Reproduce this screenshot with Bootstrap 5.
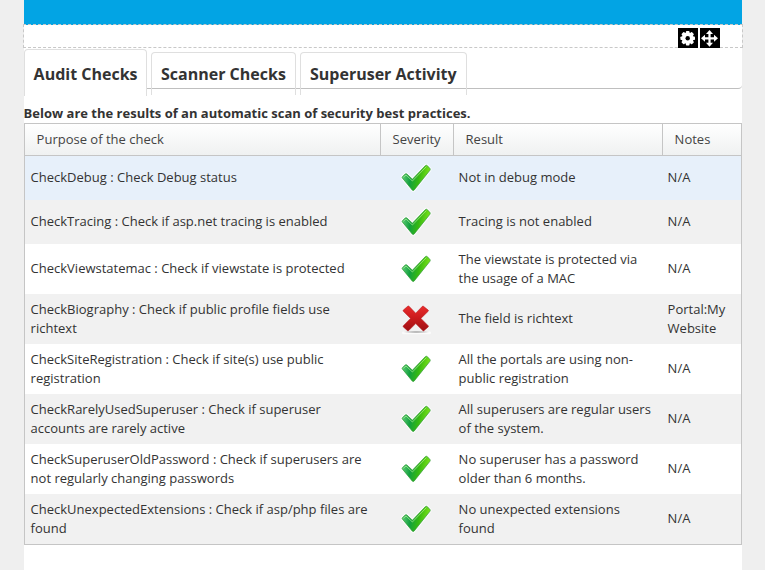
<!DOCTYPE html>
<html lang="en">
<head>
<meta charset="utf-8">
<meta name="viewport" content="width=device-width, initial-scale=1">
<title>Security Analyzer</title>
<link href="https://cdn.jsdelivr.net/npm/bootstrap@5.3.0/dist/css/bootstrap.min.css" rel="stylesheet">
<style>
  body { background: #efefef; font: 13px/19px "Open Sans", sans-serif; color: #333; overflow: hidden; }
  .page { width: 718px; height: 570px; margin-left: 24px; }
  .banner { height: 25px; background: #02a4e4; }
  .pane-bar { height: 24px; margin: -1px -1px 0; width: 720px; border: 1px dashed #c8c8c8; padding: 3px 22px 0 0; }
  .tool { width: 20px; height: 20px; background: #000; position: relative; }
  .tabs { height: 47px; margin-top: 1px; position: relative; gap: 4px; }
  .tabs::before { content: ""; position: absolute; left: 0; right: 0; top: 30px; height: 10px; border-bottom: 1px solid #bfbfbf; border-bottom-right-radius: 4px; }
  .tab-item { height: 43px; margin-top: 3px; padding: 10px 9px 0; border: 1px solid #dfdfdf; border-bottom: 0; border-radius: 4px 4px 0 0; font-size: 16px; line-height: 22px; font-weight: 700; color: #333; text-decoration: none; white-space: nowrap; position: relative; }
  .tab-item.current { height: 47px; margin-top: 0; padding: 13px 8.6px 0; background: #fff; }
  .w-a { width: 123px; } .w-b { width: 145px; } .w-c { width: 167px; }
  .intro { font-weight: 700; height: 27px; padding-top: 8px; white-space: nowrap; margin-left: -.4px; }
  .checks { width: 718px; border: 1px solid #c5c5c5; }
  .line { display: grid; grid-template-columns: 355px 73px 209px 79px; align-items: center; height: 50px; }
  .line > div { padding-left: 5.6px; padding-bottom: 1px; white-space: nowrap; }
  .line > div:has(br) { padding-bottom: 0; }
  .line:nth-child(odd) { background: #f1f1f1; }
  .line.short { height: 44px; }
  .line.short.picked { background: #e7f0fa; }
  .line.heads { height: 32px; background: linear-gradient(#fff, #eff1f1); border-bottom: 1px solid #c5c5c5; align-items: stretch; color: #444; }
  .line.heads > div { padding: 6px 0 0 11.6px; }
  .line.heads > div + div { border-left: 1px solid #c5c5c5; padding-left: 11.6px; }
  .line > .state { padding: 0 0 0 20px; }
  .state svg { display: block; width: 32px; height: 32px; }
</style>
</head>
<body>
<svg width="0" height="0" class="position-absolute" aria-hidden="true">
  <defs>
    <linearGradient id="green" x1="0" y1="0" x2="1" y2="0.15">
      <stop offset="0" stop-color="#6fd980"/><stop offset=".36" stop-color="#12a040"/><stop offset=".65" stop-color="#35b812"/><stop offset="1" stop-color="#7be318"/>
    </linearGradient>
    <linearGradient id="red" x1="0" y1="0" x2="0" y2="1">
      <stop offset="0" stop-color="#e92c2c"/><stop offset=".5" stop-color="#c91a1c"/><stop offset="1" stop-color="#9e1013"/>
    </linearGradient>
    <radialGradient id="shade"><stop offset="0" stop-color="#777" stop-opacity=".8"/><stop offset="1" stop-color="#999" stop-opacity="0"/></radialGradient>
    <symbol id="ok" viewBox="0 0 32 32">
      <path id="tick" d="M2.3 15.9Q1.8 15.2 2.5 14.6L5.2 12Q6 11.3 6.9 12L12.4 17.2 25.3 3.7Q26.4 2.8 27.4 3.7L30 6.6Q30.5 7.4 29.9 8.3L14.2 28Q13.2 29 12.2 28Z" fill="#fff" stroke="#fff" stroke-opacity=".75" stroke-width="2.8" stroke-linejoin="round"/>
      <path d="M2.3 15.9Q1.8 15.2 2.5 14.6L5.2 12Q6 11.3 6.9 12L12.4 17.2 25.3 3.7Q26.4 2.8 27.4 3.7L30 6.6Q30.5 7.4 29.9 8.3L14.2 28Q13.2 29 12.2 28Z" fill="url(#green)" stroke="#2f9a35" stroke-width=".7"/>
      <path d="M3.4 15.3 6 13 12.4 19 26.4 4.6" fill="none" stroke="#c4f7a5" stroke-opacity=".6"/>
    </symbol>
    <symbol id="bad" viewBox="0 0 32 32">
      <rect x="2" y="28.5" width="29" height="2.8" rx="1.2" fill="#fff" fill-opacity=".7"/>
      <ellipse cx="16.3" cy="29" rx="14" ry="1.4" fill="url(#shade)"/>
      <path d="M8 3Q8.6 2.8 9.1 3.3L15.7 10.2 22.4 3.3Q23 2.8 23.5 3.3L28.2 7.1Q28.7 7.7 28.2 8.3L20.9 15.4 28.2 22.7Q28.7 23.3 28.2 23.9L23.9 27.7Q23.3 28.1 22.7 27.6L15.7 20.6 8.7 27.6Q8.1 28.1 7.5 27.7L3.3 23.9Q2.8 23.3 3.3 22.7L10.5 15.4 3.3 8.3Q2.8 7.7 3.3 7.1Z" fill="url(#red)" stroke="#b3171a" stroke-width=".5"/>
    </symbol>
  </defs>
</svg>
<main class="page bg-white">
  <div class="banner"></div>
  <div class="pane-bar d-flex justify-content-end position-relative">
    <div class="d-flex" style="gap:2px">
      <div class="tool"><svg class="d-block" width="20" height="20" viewBox="0 0 20 20"><g fill="#fff"><circle cx="9.7" cy="10.2" r="5.9"/><g id="teeth"><rect x="7.9" y="2.9" width="3.6" height="14.6" rx=".8"/><rect x="2.4" y="8.4" width="14.6" height="3.6" rx=".8"/></g><use href="#teeth" transform="rotate(45 9.7 10.2)"/></g><circle cx="9.7" cy="10.2" r="2.2"/></svg></div>
      <div class="tool"><svg class="d-block" width="20" height="20" viewBox="0 0 20 20" fill="#fff"><path d="M9.5 1.9 13 5.9H10.6V9.2H14V6.8L18 10.3 14 13.8V11.4H10.6V14.7H13L9.5 18.7 6 14.7H8.4V11.4H5V13.8L1 10.3 5 6.8V9.2H8.4V5.9H6Z"/></svg></div>
    </div>
  </div>
  <nav class="tabs d-flex align-items-start">
    <a class="tab-item current w-a" href="#">Audit Checks</a>
    <a class="tab-item w-b" href="#">Scanner Checks</a>
    <a class="tab-item w-c" href="#">Superuser Activity</a>
  </nav>
  <div class="intro">Below are the results of an automatic scan of security best practices.</div>
  <section class="checks">
    <div class="line heads"><div>Purpose of the check</div><div>Severity</div><div>Result</div><div>Notes</div></div>
    <div class="line short picked"><div>CheckDebug : Check Debug status</div><div class="state"><svg><use href="#ok"/></svg></div><div>Not in debug mode</div><div>N/A</div></div>
    <div class="line short"><div>CheckTracing : Check if asp.net tracing is enabled</div><div class="state"><svg><use href="#ok"/></svg></div><div>Tracing is not enabled</div><div>N/A</div></div>
    <div class="line"><div>CheckViewstatemac : Check if viewstate is protected</div><div class="state"><svg><use href="#ok"/></svg></div><div>The viewstate is protected via<br>the usage of a MAC</div><div>N/A</div></div>
    <div class="line"><div>CheckBiography : Check if public profile fields use<br>richtext</div><div class="state"><svg><use href="#bad"/></svg></div><div>The field is richtext</div><div>Portal:My<br>Website</div></div>
    <div class="line"><div>CheckSiteRegistration : Check if site(s) use public<br>registration</div><div class="state"><svg><use href="#ok"/></svg></div><div>All the portals are using non-<br>public registration</div><div>N/A</div></div>
    <div class="line"><div>CheckRarelyUsedSuperuser : Check if superuser<br>accounts are rarely active</div><div class="state"><svg><use href="#ok"/></svg></div><div>All superusers are regular users<br>of the system.</div><div>N/A</div></div>
    <div class="line"><div>CheckSuperuserOldPassword : Check if superusers are<br>not regularly changing passwords</div><div class="state"><svg><use href="#ok"/></svg></div><div>No superuser has a password<br>older than 6 months.</div><div>N/A</div></div>
    <div class="line"><div>CheckUnexpectedExtensions : Check if asp/php files are<br>found</div><div class="state"><svg><use href="#ok"/></svg></div><div>No unexpected extensions<br>found</div><div>N/A</div></div>
  </section>
</main>
<script src="https://cdn.jsdelivr.net/npm/bootstrap@5.3.0/dist/js/bootstrap.bundle.min.js"></script>
</body>
</html>
